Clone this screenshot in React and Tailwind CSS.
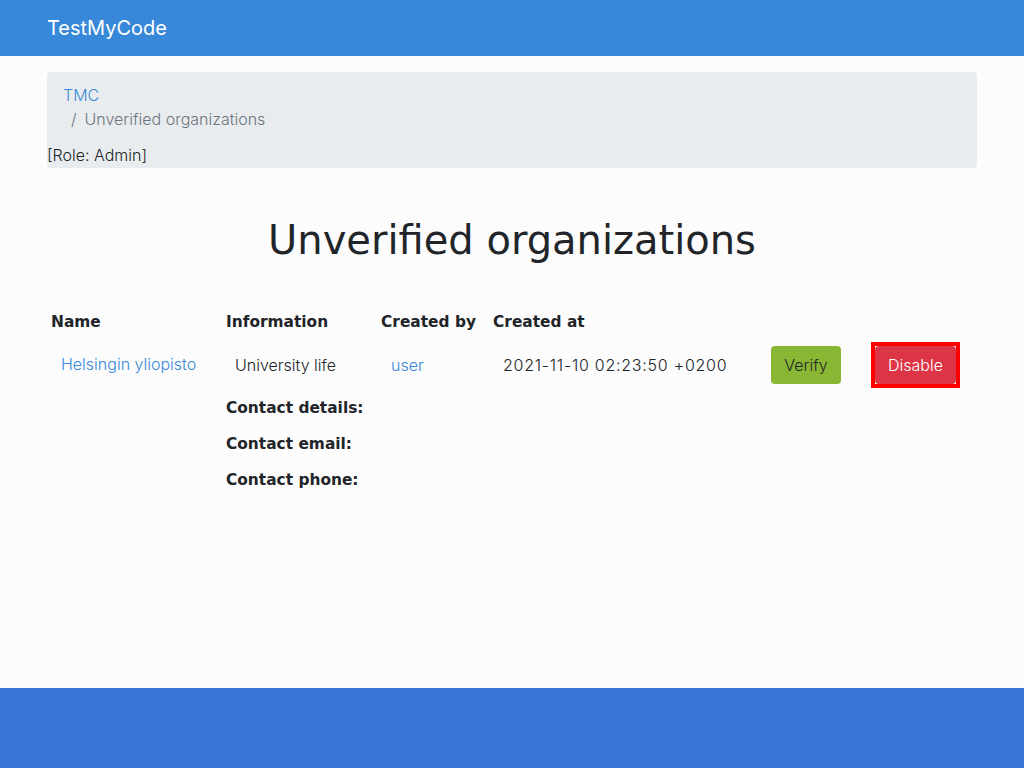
import React from 'react';

const orgs = [
  {
    name: 'Helsingin yliopisto',
    info: 'University life',
    creator: 'user',
    createdAt: '2021-11-10 02:23:50 +0200',
  },
];

const boldFont = "font-['DejaVu_Sans',sans-serif] font-bold text-[15.4px]";

export default function App() {
  return (
    <div className="min-h-screen flex flex-col bg-[#fcfcfc] text-[#212529] font-['Inter',sans-serif] font-light">
      {/* Navbar */}
      <header className="h-14 bg-[#3788d8] flex items-center">
        <div className="w-[930px] mx-auto">
          <span className="text-white text-[20px] font-normal">TestMyCode</span>
        </div>
      </header>

      <main className="flex-1">
        <div className="w-[930px] mx-auto pt-4">
          {/* Breadcrumb */}
          <nav className="bg-[#e9ecef] rounded text-base leading-6 pb-px">
            <ol className="px-4 pt-[11px] pb-3">
              <li><a className="text-[#3788d8]">TMC</a></li>
              <li className="pl-2 text-[#6c757d]">
                <span className="pr-2">/</span>Unverified organizations
              </li>
            </ol>
            <div>[Role: Admin]</div>
          </nav>

          <h1 className="mt-12 text-center text-[40px] leading-[48px] font-normal font-['DejaVu_Sans',sans-serif]">Unverified organizations</h1>

          {/* Table */}
          <table className="mt-[42px] text-base leading-6 border-collapse">
            <thead>
              <tr>
                <th className={`w-[175px] text-left px-1 py-1 ${boldFont}`}>Name</th>
                <th className={`w-[155px] text-left px-1 py-1 ${boldFont}`}>Information</th>
                <th className={`w-[112px] text-left px-1 py-1 ${boldFont}`}>Created by</th>
                <th className={`w-[282px] text-left px-1 py-1 ${boldFont}`}>Created at</th>
                <th className="w-[104px]"></th>
                <th></th>
              </tr>
            </thead>
            <tbody>
              {orgs.map(o => (
                <React.Fragment key={o.name}>
                  <tr>
                    <td className="pl-[14px] pt-[14px] pb-4 align-middle">
                      <a className="text-[#3788d8]">{o.name}</a>
                    </td>
                    <td className="pl-[13px] align-middle">{o.info}</td>
                    <td className="pl-[14px] align-middle">
                      <a className="text-[#3788d8]">{o.creator}</a>
                    </td>
                    <td className="pl-[14px] align-middle tracking-[0.75px]">{o.createdAt}</td>
                    <td className="align-middle">
                      <button className="h-[38px] w-[70px] rounded bg-[#8ab733] text-[#212529] font-light">Verify</button>
                    </td>
                    <td className="align-middle">
                      <span className="inline-flex -ml-1 border-4 border-[#ff0000]">
                        <button className="h-[38px] w-[81px] rounded bg-[#dc3545] text-white font-light">Disable</button>
                      </span>
                    </td>
                  </tr>
                  <tr>
                    <td></td>
                    <td colSpan={3} className={`px-1 pt-1 ${boldFont}`}>Contact details:</td>
                  </tr>
                  <tr>
                    <td></td>
                    <td colSpan={3} className={`px-1 pt-3 ${boldFont}`}>Contact email:</td>
                  </tr>
                  <tr>
                    <td></td>
                    <td colSpan={3} className={`px-1 pt-3 ${boldFont}`}>Contact phone:</td>
                  </tr>
                </React.Fragment>
              ))}
            </tbody>
          </table>
        </div>
      </main>

      <footer className="h-20 bg-[#3775d6]"></footer>
    </div>
  );
}
